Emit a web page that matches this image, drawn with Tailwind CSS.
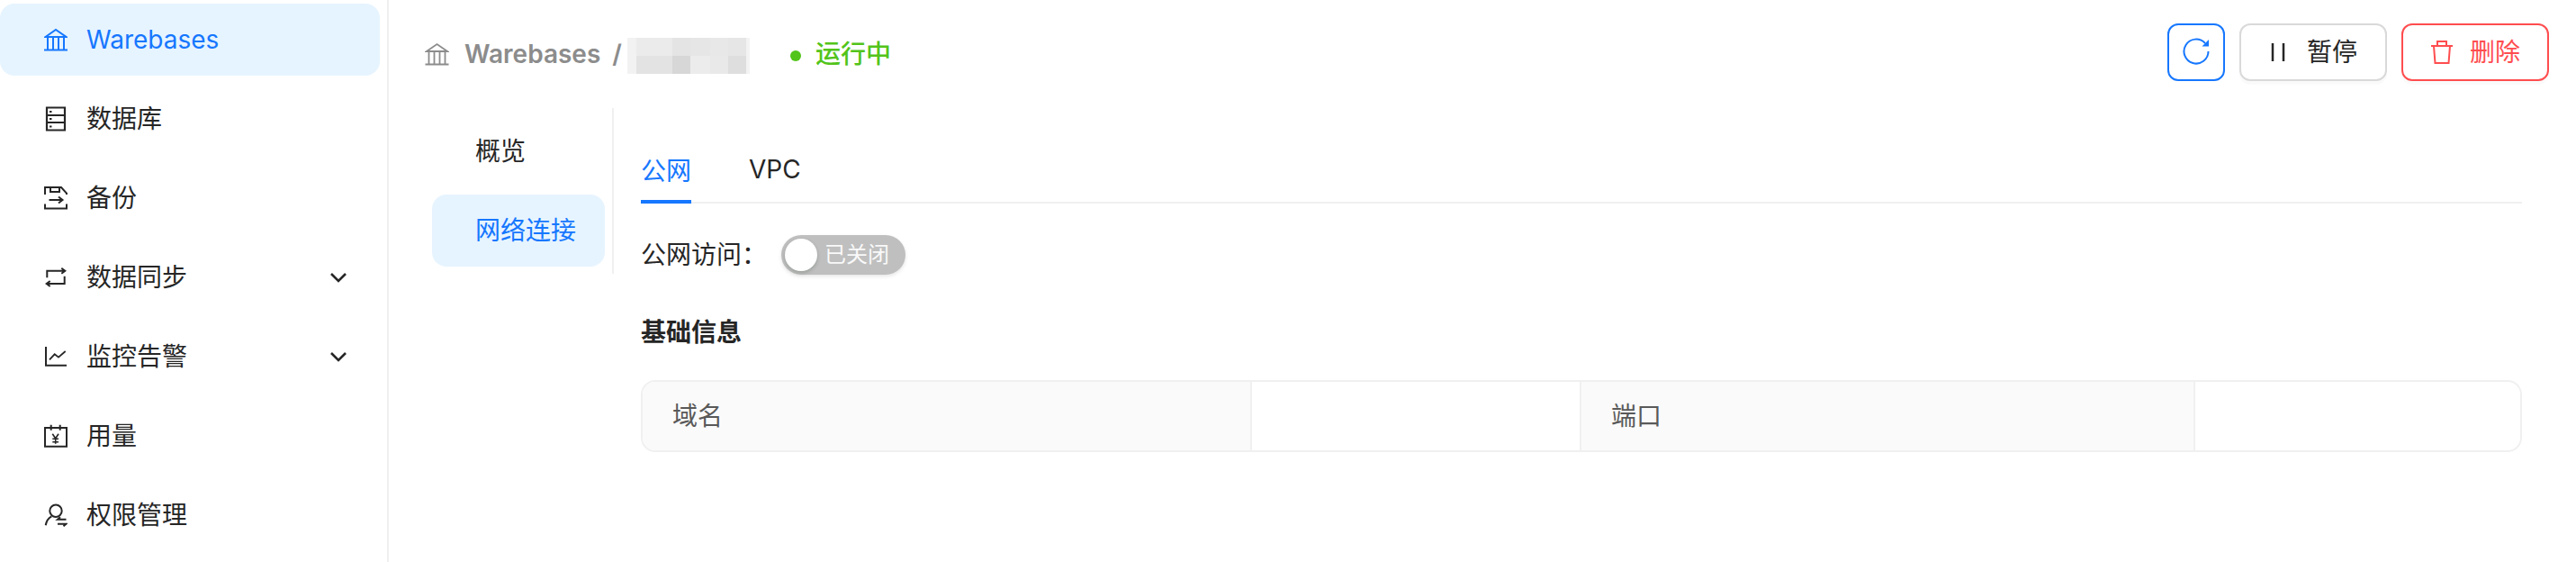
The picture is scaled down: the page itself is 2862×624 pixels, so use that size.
<!DOCTYPE html>
<html lang="en">
<head>
    <meta charset="UTF-8">
    <title>Warebases</title>
    <script src="https://cdn.jsdelivr.net/npm/@tailwindcss/browser@4"></script>
</head>
<body class="bg-white text-[#262626] font-['Inter','Noto_Sans_CJK_SC',sans-serif] text-[28px] leading-[44px] overflow-hidden">
<div class="flex h-[624px] w-[2862px]">
    <!-- sidebar -->
    <aside class="w-[432px] shrink-0 h-full border-r-2 border-[#f0f0f0] pt-1 pr-2 flex flex-col gap-2">
        <a class="flex items-center h-20 rounded-2xl bg-[#e6f4ff] text-[#1677ff] pl-[49px] gap-[21px]">
            <svg class="w-[26px] h-[26px]" viewBox="0 0 26 26" fill="none" stroke="currentColor" stroke-width="2"><path d="M1.500 10 13 2l11.500 8zM0 24.500h26M4 10v14M10 10v14M16 10v14M22 10v14"/></svg>
            <span>Warebases</span>
        </a>
        <a class="flex items-center h-20 pl-[49px] gap-[21px]">
            <svg class="w-[26px] h-[28px]" viewBox="0 0 26 28" fill="none" stroke="currentColor" stroke-width="2.200"><path d="M3 1.500h20v25H3zM3 10h20M3 18h20"/><path stroke-width="2" d="M6 6h2.500M6 14h2.500M6 22.500h2.500"/></svg>
            <span>数据库</span>
        </a>
        <a class="flex items-center h-20 pl-[49px] gap-[21px]">
            <svg class="w-[26px] h-[26px]" viewBox="0 0 26 26" fill="none" stroke="currentColor" stroke-width="2"><path d="M1 9V1h18l6 6.700V9M7 1v5h10V1M1 19.500v5h24v-5M5.500 15H20M16 11.500l4.500 3.500-4.500 3.500"/></svg>
            <span>备份</span>
        </a>
        <a class="flex items-center h-20 pl-[49px] gap-[21px]">
            <svg class="w-[26px] h-[26px]" viewBox="0 0 26 26" fill="none" stroke="currentColor" stroke-width="2"><path d="M3.300 13.300V5.700h19.500M19.300 2.700l4 3-4 3M22.700 11.700V20H3.300M6.700 17l-4 3 4 3"/></svg>
            <span>数据同步</span>
            <svg class="w-[20px] h-[14px] ml-auto mr-[36px]" viewBox="0 0 20 14" fill="none" stroke="currentColor" stroke-width="2.600"><path d="m2 3 8 8 8-8"/></svg>
        </a>
        <a class="flex items-center h-20 pl-[49px] gap-[21px]">
            <svg class="w-[26px] h-[26px]" viewBox="0 0 26 26" fill="none" stroke="currentColor" stroke-width="2"><path d="M2 2v20.700h23"/><path stroke-width="1.800" d="m6 16.300 5.700-6 4.300 3.400 7.700-6.700"/></svg>
            <span>监控告警</span>
            <svg class="w-[20px] h-[14px] ml-auto mr-[36px]" viewBox="0 0 20 14" fill="none" stroke="currentColor" stroke-width="2.600"><path d="m2 3 8 8 8-8"/></svg>
        </a>
        <a class="flex items-center h-20 pl-[49px] gap-[21px]">
            <svg class="w-[26px] h-[26px]" viewBox="0 0 26 26" fill="none" stroke="currentColor" stroke-width="2"><path d="M1 4h24v20.700H1zM7.700 .7v6M17.700 .7v6"/><path stroke-width="1.600" d="m9.300 10.700 3.400 5 3.300-5M12.700 15.700v6M9.300 16.300h6.700M9.300 19.700h6.700"/></svg>
            <span>用量</span>
        </a>
        <a class="flex items-center h-20 pl-[49px] gap-[21px]">
            <svg class="w-[26px] h-[26px]" viewBox="0 0 26 26" fill="none" stroke="currentColor" stroke-width="2"><circle cx="13" cy="8.300" r="6.700"/><path d="M1.700 24.300c.8-4.500 3-8.200 6.600-10"/><path d="M24.500 17.700H15l3-2.500M15 22.700h9.500l-3 2.500"/></svg>
            <span>权限管理</span>
        </a>
    </aside>

    <!-- main -->
    <main class="flex-1 flex flex-col min-w-0">
        <header class="flex items-start h-[120px] pl-[40px] pr-[30px]">
            <div class="flex items-center h-[120px]">
                <svg class="w-[27px] h-[26px] text-[#8c8c8c]" viewBox="0 0 26 26" fill="none" stroke="currentColor" stroke-width="1.800"><path d="M1.500 10 13 2l11.500 8zM0 24.500h26M4 10v14M10 10v14M16 10v14M22 10v14"/></svg>
                <span class="ml-[17px] font-semibold text-[#8c8c8c]">Warebases</span>
                <span class="ml-[13px] font-semibold text-[#8c8c8c]">/</span>
                <div class="ml-[6px] w-[136px] h-10 mt-[4px] grid grid-cols-[10px_40px_20px_22px_20px_20px_4px] grid-rows-2">
                    <div class="bg-[#f2f2f2]"></div><div class="bg-[#ebebeb]"></div><div class="bg-[#e4e4e4]"></div><div class="bg-[#e6e6e6]"></div><div class="bg-[#e8e8e8]"></div><div class="bg-[#e6e6e6]"></div><div class="bg-[#f3f3f3]"></div>
                    <div class="bg-[#f2f2f2]"></div><div class="bg-[#e3e3e3]"></div><div class="bg-[#d7d7d7]"></div><div class="bg-[#ececec]"></div><div class="bg-[#e9e9e9]"></div><div class="bg-[#dedede]"></div><div class="bg-[#f3f3f3]"></div>
                </div>
                <span class="ml-[45px] w-3 h-3 rounded-full bg-[#52c41a] mt-[4px]"></span>
                <span class="ml-[16px] text-[#52c41a] font-medium">运行中</span>
            </div>
            <div class="ml-auto flex gap-4 mt-[26px]">
                <button class="w-16 h-16 rounded-xl border-2 border-[#1677ff] text-[#1677ff] flex items-center justify-center">
                    <svg class="w-[32px] h-[32px] -mt-[4px]" viewBox="0 0 32 32" fill="none" stroke="currentColor" stroke-width="2"><path d="M26 8A13.500 13.500 0 1 0 29.500 17"/><path fill="currentColor" stroke="none" d="M30 4v7.500h-7.500z"/></svg>
                </button>
                <button class="w-[164px] h-16 rounded-xl border-2 border-[#d9d9d9] shadow-[0_4px_0_rgba(0,0,0,0.02)] flex items-center justify-center gap-[24px] pl-[2px]">
                    <svg class="w-[16px] h-[24px]" viewBox="0 0 16 24" fill="none" stroke="currentColor" stroke-width="2.500"><path d="M2 2v20M14 2v20"/></svg>
                    <span>暂停</span>
                </button>
                <button class="w-[164px] h-16 rounded-xl border-2 border-[#ff4d4f] text-[#ff4d4f] shadow-[0_4px_0_rgba(0,0,0,0.02)] flex items-center justify-center gap-[18px]">
                    <svg class="w-[26px] h-[28px]" viewBox="0 0 26 28" fill="none" stroke="currentColor" stroke-width="2"><path d="M1 7h24M8 7V2h10v5M4 7l1.500 19h15L22 7"/></svg>
                    <span>删除</span>
                </button>
            </div>
        </header>

        <div class="flex">
            <nav class="w-[250px] shrink-0 h-[184px] border-r-2 border-[#f0f0f0] pl-[48px] pr-[8px] flex flex-col gap-2 relative">
                <a class="h-20 -mb-2 mt-2 pl-[48px] flex items-center">概览</a>
                <a class="h-20 mt-2 pl-[48px] rounded-2xl bg-[#e6f4ff] text-[#1677ff] flex items-center">网络连接</a>
            </nav>
            <section class="flex-1 min-w-0 pl-[30px] pr-[60px]">
                <div class="flex gap-[64px] h-[106px] border-b-2 border-[#f0f0f0] relative items-end">
                    <span class="h-[58px] text-[#1677ff] border-b-4 border-[#1677ff] -mb-[2px]">公网</span>
                    <span class="h-[58px]">VPC</span>
                </div>
                <div class="flex items-center mt-[35px] h-[44px]">
                    <span class="w-[156px]">公网访问：</span>
                    <div class="w-[138px] h-[44px] rounded-full bg-[#bfbfbf] flex items-center pl-[4px] shadow-[0_2px_4px_rgba(0,0,0,0.1)]">
                        <span class="w-9 h-9 rounded-full bg-white shadow-[0_2px_4px_rgba(0,35,11,0.2)]"></span>
                        <span class="ml-[8px] text-[24px] text-white/90">已关闭</span>
                    </div>
                </div>
                <h2 class="mt-[42px] font-semibold">基础信息</h2>
                <div class="mt-[31px] grid grid-cols-[675px_368px_680px_1fr] h-20 rounded-2xl border-2 border-[#f0f0f0] overflow-hidden text-[#595959]">
                    <div class="bg-[#fafafa] flex items-center pl-[33px]">域名</div>
                    <div class="border-x-2 border-[#f0f0f0]"></div>
                    <div class="bg-[#fafafa] flex items-center pl-[33px]">端口</div>
                    <div class="border-l-2 border-[#f0f0f0]"></div>
                </div>
            </section>
        </div>
    </main>
</div>
</body>
</html>
